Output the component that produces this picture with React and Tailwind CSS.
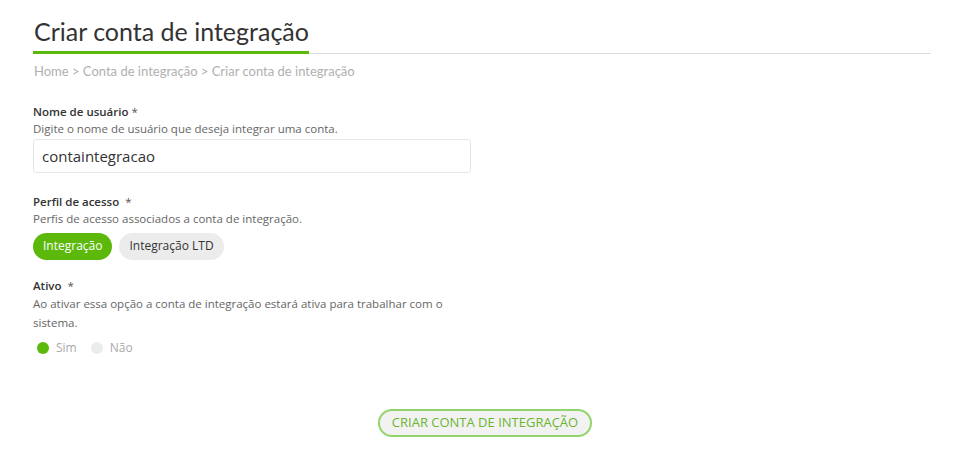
export default function App() {
  return (
    <div className="min-h-screen w-full bg-white font-['Open_Sans',sans-serif]">
      <div className="pl-[33px] pr-[28px] pt-[16px]">
        {/* Header with underline */}
        <div className="flex items-end">
          <div className="border-b-[3px] border-[#5cb90c]">
            <h1 className="pl-[1px] pb-[5px] font-['Lato',sans-serif] text-[25px] leading-[30px] text-[#333]">
              Criar conta de integração
            </h1>
          </div>
          <div className="flex-1 border-b border-[#dcdcdc]"></div>
        </div>

        <nav className="mt-[8px] pl-[1px] font-['Lato',sans-serif] text-[13px] text-[#b0b0b0]">
          Home &gt; Conta de integração &gt; Criar conta de integração
        </nav>

        <form className="mt-[21px] w-[438px]">
          <div>
            <label className="block text-[11.5px] leading-[17px] font-semibold text-[#333]">
              Nome de usuário <span className="font-normal text-[#555]">*</span>
            </label>
            <p className="text-[11.5px] leading-[17px] text-[#666]">
              Digite o nome de usuário que deseja integrar uma conta.
            </p>
            <input
              readOnly
              value="containtegracao"
              className="mt-[2px] block h-[34px] w-full rounded-[3px] border border-[#e6e6e6] px-[8px] text-[15px] text-[#333] outline-none"
            />
          </div>

          <div className="mt-[20px]">
            <label className="block text-[11.5px] leading-[17px] font-semibold text-[#333]">
              Perfil de acesso <span className="ml-[3px] font-normal text-[#555]">*</span>
            </label>
            <p className="text-[11.5px] leading-[17px] text-[#666]">
              Perfis de acesso associados a conta de integração.
            </p>
            <div className="mt-[6px] flex gap-[7px]">
              <span className="flex h-[27px] items-center rounded-full bg-[#5cb90c] px-[10px] text-[12px] text-white">
                Integração
              </span>
              <span className="flex h-[27px] items-center rounded-full bg-[#ececec] px-[10px] text-[12px] text-[#333]">
                Integração LTD
              </span>
            </div>
          </div>

          <div className="mt-[17px]">
            <label className="block text-[11.5px] leading-[17px] font-semibold text-[#333]">
              Ativo <span className="ml-[3px] font-normal text-[#555]">*</span>
            </label>
            <p className="text-[11.5px] leading-[19px] text-[#666] pr-[8px]">
              Ao ativar essa opção a conta de integração estará ativa para trabalhar com o sistema.
            </p>
            <div className="mt-[8px] flex h-[17px] items-center pl-[4px] text-[12px] text-[#aaa]">
              <span className="h-[12px] w-[12px] rounded-full bg-[#5cb90c]"></span>
              <span className="ml-[7px]">Sim</span>
              <span className="ml-[14px] h-[12px] w-[12px] rounded-full bg-[#ececec]"></span>
              <span className="ml-[7px]">Não</span>
            </div>
          </div>
        </form>

        <div className="mt-[52px] flex justify-center pl-[6px]">
          <button className="h-[28px] rounded-full border-2 border-[#93d46c] bg-[#f2f2f2] px-[12px] text-[13px] text-[#6cb52e]">
            CRIAR CONTA DE INTEGRAÇÃO
          </button>
        </div>
      </div>
    </div>
  );
}
